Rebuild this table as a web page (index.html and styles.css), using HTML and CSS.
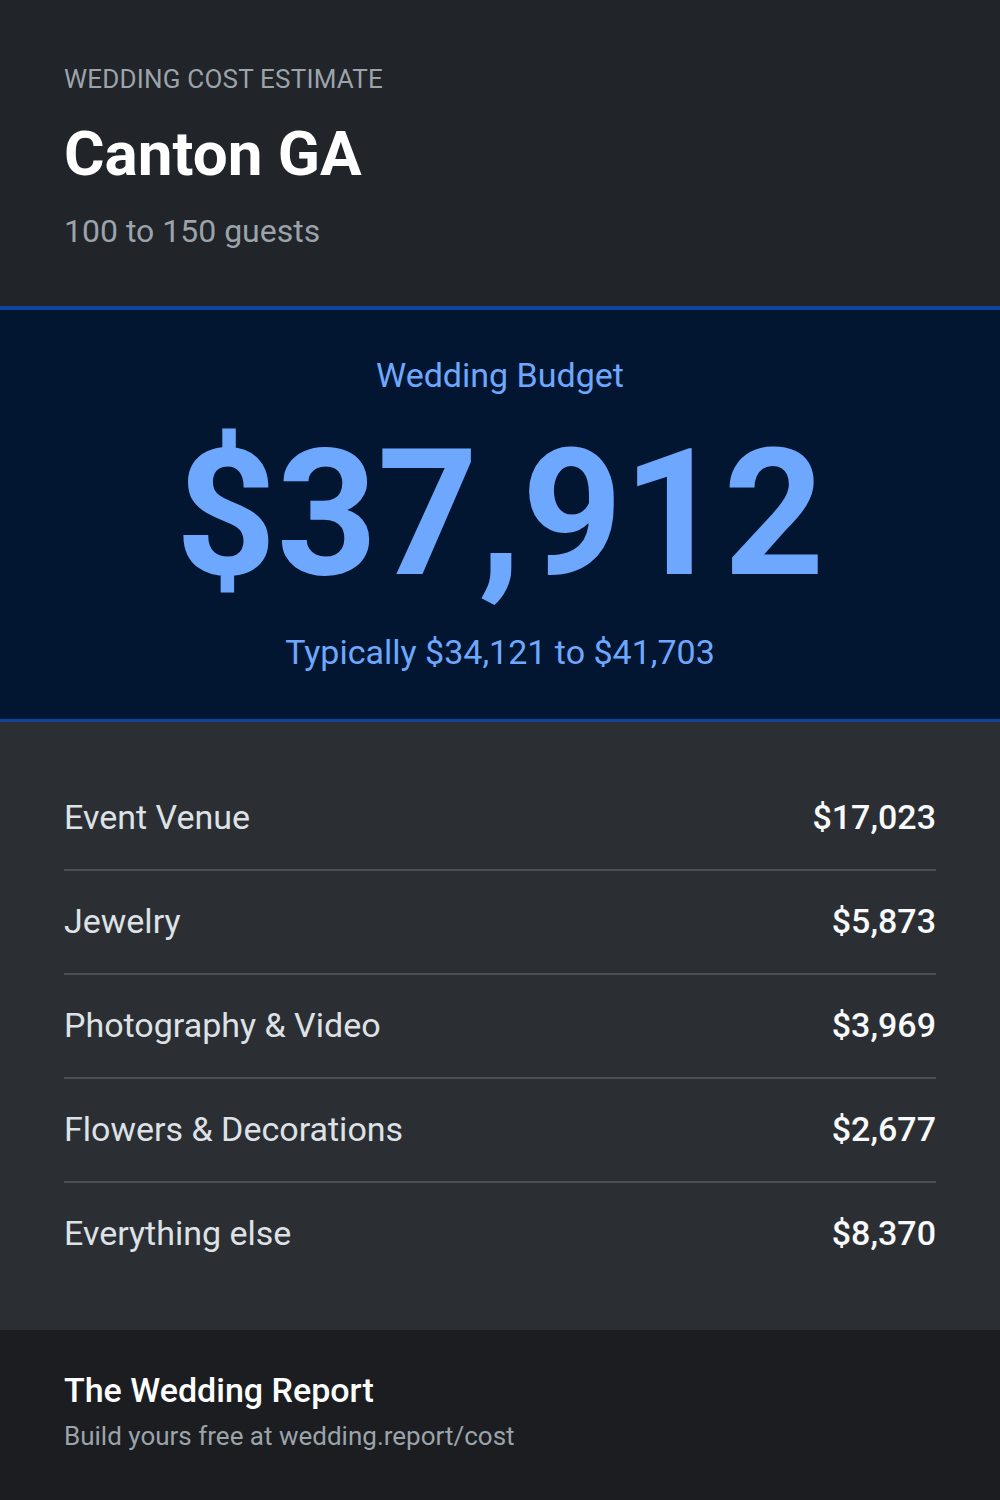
FILE: index.html
```html
<!DOCTYPE html>
<html lang="en">
<head>
	<meta charset="UTF-8" />
	<title>Canton GA wedding cost</title>
	<link rel="stylesheet" href="styles.css">
</head>
<body>
	<div class="card">
		<div class="head">
			<div class="eyebrow">WEDDING COST ESTIMATE</div>
			<div class="city">Canton GA</div>
			<div class="guests">100 to 150 guests</div>
		</div>
		<div class="budget">
			<div class="budget-label">Wedding Budget</div>
			<div class="budget-total">$37,912</div>
			<div class="budget-range">Typically $34,121 to $41,703</div>
		</div>
		<div class="lines">
			<div class="line">
				<span class="line-name">Event Venue</span>
				<span class="line-cost">$17,023</span>
			</div>
			<div class="line">
				<span class="line-name">Jewelry</span>
				<span class="line-cost">$5,873</span>
			</div>
			<div class="line">
				<span class="line-name">Photography &amp; Video</span>
				<span class="line-cost">$3,969</span>
			</div>
			<div class="line">
				<span class="line-name">Flowers &amp; Decorations</span>
				<span class="line-cost">$2,677</span>
			</div>
			<div class="line">
				<span class="line-name">Everything else</span>
				<span class="line-cost">$8,370</span>
			</div>
		</div>
		<div class="foot">
			<div class="brand">The Wedding Report</div>
			<div class="cta">Build yours free at wedding.report/cost</div>
		</div>
	</div>
</body>
</html>
```

FILE: styles.css
```css
body{
	margin:0;
	background:#1b1d20;
	font-family:Roboto, "Liberation Sans", sans-serif;
}
.card{
	width:1000px;
	height:1500px;
	display:flex;
	flex-direction:column;
}
.head{
	background:#212428;
	padding:64px 64px 56px;
}
.eyebrow{
	font-size:26px;
	line-height:1.2;
	letter-spacing:0.2px;
	color:#9ba3ab;
}
.city{
	margin-top:22px;
	font-size:62px;
	line-height:1.2;
	font-weight:700;
	color:#fff;
}
.guests{
	margin-top:20px;
	font-size:32px;
	line-height:1.2;
	color:#9ba3ab;
}
.budget{
	background:#021631;
	border-top:4px solid #0e449c;
	border-bottom:3px solid #0e449c;
	padding:45px 64px 46px;
	text-align:center;
	color:#6ea8fe;
}
.budget-label{
	font-size:34px;
	line-height:1.2;
}
.budget-total{
	margin-top:30px;
	font-size:176px;
	line-height:1;
	font-weight:700;
}
.budget-range{
	margin-top:30px;
	font-size:34px;
	line-height:1.2;
}
.lines{
	background:#2b2f33;
	padding:45px 64px 46px;
}
.line{
	display:flex;
	justify-content:space-between;
	align-items:center;
	padding:30.6px 0;
	border-bottom:2px solid #4a4e55;
	font-size:34px;
	line-height:1.2;
}
.line:last-child{
	border-bottom:none;
}
.line-name{
	color:#dee2e6;
}
.line-cost{
	color:#f8f9fa;
	font-weight:500;
}
.foot{
	flex:1;
	background:#1b1d20;
	padding:40px 64px 0;
}
.brand{
	font-size:34px;
	line-height:1.2;
	font-weight:500;
	color:#fff;
}
.cta{
	margin-top:10px;
	font-size:26px;
	line-height:1.2;
	color:#9ba3ab;
}
```
